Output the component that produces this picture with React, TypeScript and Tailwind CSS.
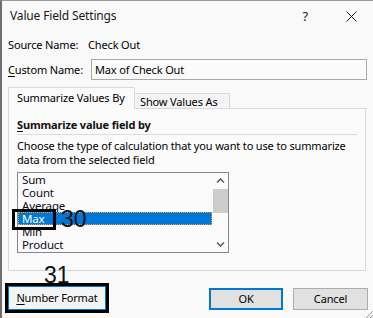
import React from 'react';

const items = ['Sum', 'Count', 'Average', 'Max', 'Min', 'Product'];

function Chevron({ down }: { down?: boolean }) {
  return (
    <svg width="9" height="6" viewBox="0 0 9 6" className="block">
      <path
        d={down ? 'M1 1.5 L4.5 5 L8 1.5' : 'M1 4.5 L4.5 1 L8 4.5'}
        fill="none"
        stroke="#606060"
        strokeWidth="1.6"
      />
    </svg>
  );
}

export default function App() {
  return (
    <div
      className="relative w-[373px] h-[318px] overflow-hidden bg-[#f9f9f9] border-l-2 border-t border-l-[#6f6f6f] border-t-[#9a9a9a] text-[11px] tracking-[-0.15px] text-[#000] leading-[16px] whitespace-nowrap"
      style={{ fontFamily: '"Noto Sans", "Open Sans", sans-serif' }}
    >
      {/* Title bar */}
      <div className="h-[30px] flex items-center pl-[8px]">
        <span className="text-[12px] text-[#1a1a1a]">Value Field Settings</span>
        <span className="ml-auto mr-[38px] text-[13px] text-[#1a1a1a]">?</span>
        <svg width="11" height="11" viewBox="0 0 11 11" className="mr-[16px]">
          <path d="M0.5 0.5 L10.5 10.5 M10.5 0.5 L0.5 10.5" stroke="#1a1a1a" strokeWidth="1" />
        </svg>
      </div>

      {/* Source name */}
      <div className="h-[28px] flex items-center pl-[6px]">
        <span className="w-[80px] shrink-0">Source Name:</span>
        <span>Check Out</span>
      </div>

      {/* Custom name */}
      <div className="h-[21px] flex items-center pl-[6px]">
        <span className="w-[83px] shrink-0">
          <span className="underline underline-offset-2">C</span>ustom Name:
        </span>
        <div className="w-[276px] shrink-0 h-[21px] border border-[#a9a9a9] bg-[#fbfbfb] flex items-center pl-[3px]">
          Max of Check Out
        </div>
      </div>

      {/* Tabs */}
      <div className="mt-[7px] ml-[6px] flex items-end h-[21px]">
        <div className="relative z-10 w-[127px] h-[22px] -mb-[1px] border border-b-0 border-[#d9d9d9] bg-[#fbfbfb] flex items-center pl-[8px] pb-[1px]">
          Summarize Values By
        </div>
        <div className="w-[95px] h-[15px] border border-l-0 border-b-0 border-[#d9d9d9] bg-[#f5f5f5] flex items-center pl-[5px] pt-[2px]">
          Show Values As
        </div>
      </div>

      {/* Panel */}
      <div className="ml-[6px] w-[358px] h-[163px] border border-[#d9d9d9] bg-[#fbfbfb] px-[8px] pt-[8px]">
        <div className="h-[18px] border-b border-[#dcdcdc] font-bold leading-[16px] text-[#111]">
          <span className="underline underline-offset-2">S</span>ummarize value field by
        </div>
        <div className="mt-[4px] leading-[14px]">
          Choose the type of calculation that you want to use to summarize
          <br />
          data from the selected field
        </div>
        <div className="mt-[5px] w-[212px] h-[81px] border border-[#828790] bg-[#fbfbfb] flex">
          <div className="flex-1 flex flex-col">
            {items.map((it) => (
              <div
                key={it}
                className={`h-[13px] leading-[13px] pl-[4px] text-[11.5px] ${
                  it === 'Max'
                    ? 'bg-[#0078d7] text-white outline-1 outline-dotted outline-[#ff9d2e] -outline-offset-1'
                    : 'text-[#0a0a20]'
                }`}
              >
                {it}
              </div>
            ))}
          </div>
          <div className="w-[16px] flex flex-col items-center">
            <div className="h-[16px] flex items-center justify-center">
              <Chevron />
            </div>
            <div className="w-[15px] h-[24px] bg-[#cdcdcd]" />
            <div className="flex-1" />
            <div className="h-[16px] flex items-center justify-center">
              <Chevron down />
            </div>
          </div>
        </div>
      </div>

      {/* Buttons */}
      <div className="mt-[12px] flex items-start">
        <div className="ml-[3px] w-[104px] h-[30px] border-[3px] border-black">
          <div className="w-full h-full border border-[#0078d7] bg-[#f4f4f4] flex items-center justify-center">
            <span>
              <span className="underline underline-offset-2">N</span>umber Format
            </span>
          </div>
        </div>
        <div className="ml-[100px] mt-[5px] w-[74px] h-[22px] border-2 border-[#0078d7] bg-[#e1e1e1] flex items-center justify-center">
          OK
        </div>
        <div className="ml-[10px] mt-[5px] w-[75px] h-[22px] border border-[#adadad] bg-[#e1e1e1] flex items-center justify-center">
          Cancel
        </div>
      </div>

      {/* Annotation 30 */}
      <div className="absolute left-[10px] top-[208px] w-[44px] h-[21px] border-[3px] border-black" />
      <div
        className="absolute left-[59px] top-[204px] text-[23px] leading-[28px] tracking-normal text-[#111]"
        style={{ fontFamily: '"Liberation Sans", Arial, sans-serif' }}
      >
        30
      </div>

      {/* Annotation 31 */}
      <div
        className="absolute left-[42px] top-[260px] text-[23px] leading-[28px] tracking-normal text-[#111]"
        style={{ fontFamily: '"Liberation Sans", Arial, sans-serif' }}
      >
        31
      </div>

      {/* Resize grip */}
      <svg width="8" height="8" viewBox="0 0 8 8" className="absolute right-0 bottom-0">
        <path d="M8 1 L1 8 M8 5 L5 8" stroke="#9a9a9a" strokeWidth="1" />
      </svg>
    </div>
  );
}
